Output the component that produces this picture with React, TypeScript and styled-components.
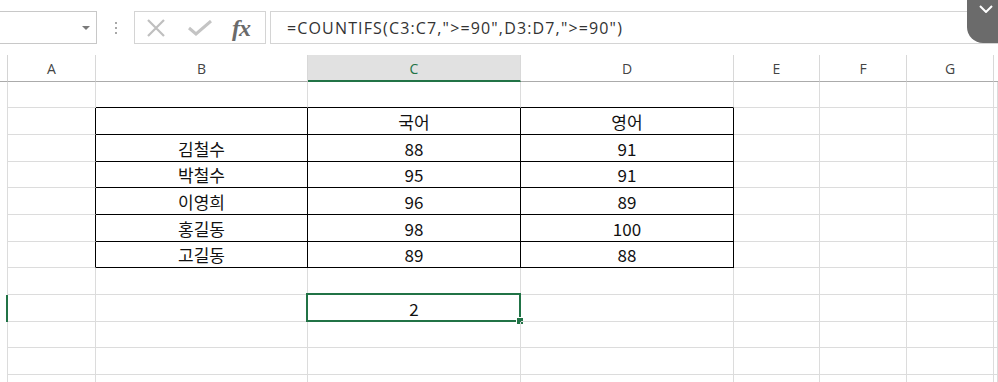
import React from 'react'
import styled, { createGlobalStyle } from 'styled-components'

const GlobalStyle = createGlobalStyle`
  html, body { margin: 0; padding: 0; background: #fff; }
  body {
    width: 998px;
    height: 382px;
    overflow: hidden;
    font-family: "Noto Sans", "Noto Sans CJK KR", sans-serif;
  }
`

const GRID = '#dcdcdc'
const GREEN = '#217346'

const columns = ['A', 'B', 'C', 'D', 'E', 'F', 'G']
const rowHeights = [26, 27, 27, 26, 27, 27, 26, 27, 27, 26, 27, 10]

const data: string[][] = [
  ['', '', '', ''],
  ['', '', '국어', '영어'],
  ['', '김철수', '88', '91'],
  ['', '박철수', '95', '91'],
  ['', '이영희', '96', '89'],
  ['', '홍길동', '98', '100'],
  ['', '고길동', '89', '88'],
  ['', '', '', ''],
  ['', '', '2', ''],
  ['', '', '', ''],
  ['', '', '', ''],
  ['', '', '', ''],
]

const SELECTED_ROW = 8
const SELECTED_COL = 2

const App: React.FC = () => {
  const inTable = (r: number, c: number) => r >= 1 && r <= 6 && c >= 1 && c <= 3

  return (
    <>
      <GlobalStyle />
      <Screen>
        <FormulaBar>
          <NameBox>
            <DropArrow />
          </NameBox>
          <Grip>
            <span /><span /><span />
          </Grip>
          <IconBox>
            <svg width="20" height="18" viewBox="0 0 20 18">
              <path d="M2 1 L18 17 M18 1 L2 17" stroke="#bfbfbf" strokeWidth="2.2" fill="none" />
            </svg>
            <svg width="24" height="16" viewBox="0 0 24 16">
              <path d="M1 8 L8 14 L23 1" stroke="#c4c4c4" strokeWidth="3" fill="none" />
            </svg>
            <Fx>fx</Fx>
          </IconBox>
          <FormulaInput>=COUNTIFS(C3:C7,"&gt;=90",D3:D7,"&gt;=90")</FormulaInput>
          <CollapseButton>
            <svg width="14" height="8" viewBox="0 0 14 8">
              <path d="M1 1 L7 7 L13 1" stroke="#fff" strokeWidth="2" fill="none" />
            </svg>
          </CollapseButton>
        </FormulaBar>

        <Sheet>
          <Corner />
          {columns.map((col, i) => (
            <ColHeader key={col} $active={i === SELECTED_COL}>{col}</ColHeader>
          ))}
          <Corner $filler />

          {rowHeights.map((h, r) => {
            const row = data[r] ?? ['', '', '', '']
            return (
              <React.Fragment key={r}>
                <RowStub $h={h} $active={r === SELECTED_ROW} />
                {columns.map((col, c) => {
                  const value = c < 4 ? row[c] : ''
                  const blackRight = inTable(r, c) || (c === 0 && r >= 1 && r <= 6)
                  const blackBottom = inTable(r, c) || (r === 0 && c >= 1 && c <= 3)
                  return (
                    <Cell
                      key={col}
                      $blackRight={blackRight}
                      $blackBottom={blackBottom}
                      $selected={r === SELECTED_ROW && c === SELECTED_COL}
                    >
                      {value}
                    </Cell>
                  )
                })}
                <Cell $blackRight={false} $blackBottom={false} $selected={false} />
              </React.Fragment>
            )
          })}
        </Sheet>
      </Screen>
    </>
  )
}

const Screen = styled.div`
  width: 998px;
  height: 382px;
  overflow: hidden;
  background: #fff;
`

const FormulaBar = styled.div`
  position: relative;
  display: flex;
  align-items: flex-start;
  height: 55px;
  padding-top: 11px;
  box-sizing: border-box;
`

const NameBox = styled.div`
  width: 97px;
  height: 33px;
  box-sizing: border-box;
  border: 1px solid #c8c8c8;
  border-left: none;
  display: flex;
  align-items: center;
  justify-content: flex-end;
  padding-right: 6px;
`

const DropArrow = styled.span`
  width: 0;
  height: 0;
  border-left: 4px solid transparent;
  border-right: 4px solid transparent;
  border-top: 4px solid #7a7a7a;
`

const Grip = styled.div`
  width: 37px;
  height: 33px;
  display: flex;
  flex-direction: column;
  align-items: center;
  justify-content: center;
  gap: 3px;

  span {
    width: 2px;
    height: 2px;
    background: #a8a8a8;
  }
`

const IconBox = styled.div`
  width: 132px;
  height: 33px;
  box-sizing: border-box;
  border: 1px solid #d4d4d4;
  display: flex;
  align-items: center;
  padding-left: 11px;
  gap: 22px;
`

const Fx = styled.span`
  font-family: "Liberation Serif", "DejaVu Serif", serif;
  font-style: italic;
  font-weight: bold;
  font-size: 24px;
  color: #6a6a6a;
  letter-spacing: -1px;
  margin-left: -2px;
  line-height: 1;
`

const FormulaInput = styled.div`
  margin-left: 4px;
  flex: 1;
  height: 33px;
  box-sizing: border-box;
  border: 1px solid #d4d4d4;
  border-right: none;
  padding-left: 16px;
  display: flex;
  align-items: center;
  font-family: "Open Sans", "Noto Sans", sans-serif;
  font-size: 16px;
  letter-spacing: 1.15px;
  color: #333;
  white-space: pre;
`

const CollapseButton = styled.div`
  position: absolute;
  top: 0;
  right: 0;
  width: 31px;
  height: 43px;
  background: #6b6b6b;
  border-bottom-left-radius: 16px;
  display: flex;
  justify-content: center;
  align-items: flex-start;
  padding-top: 5px;
  padding-left: 6px;
  box-sizing: border-box;
`

const Sheet = styled.div`
  display: grid;
  grid-template-columns: 8px 88px 212px 213px 213px 86px 87px 87px 1fr;
  grid-template-rows: 27px;
  grid-auto-rows: auto;
`

const Corner = styled.div<{ $filler?: boolean }>`
  height: 27px;
  box-sizing: border-box;
  border-bottom: 1px solid #ababab;
  border-right: ${p => (p.$filler ? 'none' : '1px solid #d4d4d4')};
`

const ColHeader = styled.div<{ $active: boolean }>`
  height: 27px;
  box-sizing: border-box;
  display: flex;
  align-items: center;
  justify-content: center;
  font-family: "Open Sans", "Noto Sans", sans-serif;
  font-size: 14px;
  color: ${p => (p.$active ? GREEN : '#444')};
  background: ${p => (p.$active ? '#e1e1e1' : '#fff')};
  border-right: 1px solid #d8d8d8;
  border-bottom: ${p => (p.$active ? `2px solid ${GREEN}` : '1px solid #ababab')};
  padding-top: ${p => (p.$active ? '1px' : '0')};
`

const RowStub = styled.div<{ $h: number; $active: boolean }>`
  height: ${p => p.$h}px;
  box-sizing: border-box;
  border-right: ${p => (p.$active ? `2px solid ${GREEN}` : `1px solid ${GRID}`)};
`

const Cell = styled.div<{ $blackRight: boolean; $blackBottom: boolean; $selected: boolean }>`
  position: relative;
  box-sizing: border-box;
  display: flex;
  align-items: center;
  justify-content: center;
  font-family: "Noto Sans CJK KR", "Noto Sans", sans-serif;
  font-size: 17px;
  color: #111;
  border-right: 1px solid ${p => (p.$blackRight ? '#000' : GRID)};
  border-bottom: 1px solid ${p => (p.$blackBottom ? '#000' : GRID)};
  line-height: 1;

  ${p =>
    p.$selected &&
    `
    &::before {
      content: '';
      position: absolute;
      left: -2px;
      top: -2px;
      right: -1px;
      bottom: -1px;
      border: 2px solid ${GREEN};
    }
    &::after {
      content: '';
      position: absolute;
      right: -4px;
      bottom: -4px;
      width: 6px;
      height: 6px;
      background: ${GREEN};
      border: 1px solid #fff;
    }
  `}
`

export default App
